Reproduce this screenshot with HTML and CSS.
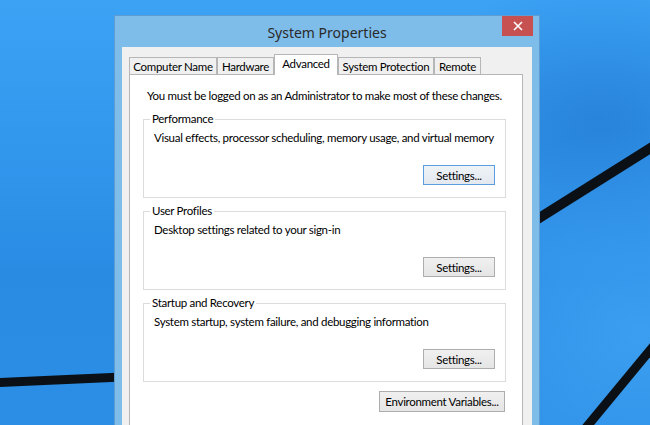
FILE: index.html
```html
<!DOCTYPE html>
<html>
<head>
<meta charset="utf-8">
<title>System Properties</title>
<link rel="stylesheet" href="styles.css">
</head>
<body>
<div class="desktop">
  <svg class="wallpaper" width="650" height="425" viewBox="0 0 650 425">
    <line x1="-10" y1="383" x2="300" y2="369" class="stroke" stroke-width="9"/>
    <line x1="380" y1="318" x2="660" y2="142" class="stroke" stroke-width="10"/>
    <line x1="570" y1="447" x2="670" y2="326" class="stroke" stroke-width="9"/>
  </svg>
  <div class="window">
    <div class="titlebar">
      <span class="title">System Properties</span>
      <button class="close" aria-label="Close">
        <svg width="10" height="10" viewBox="0 0 10 10"><path d="M1 1 L9 9 M9 1 L1 9" stroke="#fff" stroke-width="1.6" fill="none"/></svg>
      </button>
    </div>
    <div class="client">
      <div class="tabs">
        <div class="tab tab-cn">Computer Name</div>
        <div class="tab tab-hw">Hardware</div>
        <div class="tab tab-adv active">Advanced</div>
        <div class="tab tab-sp">System Protection</div>
        <div class="tab tab-rm">Remote</div>
      </div>
      <div class="panel">
        <p class="note">You must be logged on as an Administrator to make most of these changes.</p>
        <fieldset class="group">
          <legend>Performance</legend>
          <p class="desc">Visual effects, processor scheduling, memory usage, and virtual memory</p>
          <div class="actions"><button class="btn btn-settings default">Settings...</button></div>
        </fieldset>
        <fieldset class="group">
          <legend>User Profiles</legend>
          <p class="desc">Desktop settings related to your sign-in</p>
          <div class="actions"><button class="btn btn-settings">Settings...</button></div>
        </fieldset>
        <fieldset class="group">
          <legend>Startup and Recovery</legend>
          <p class="desc">System startup, system failure, and debugging information</p>
          <div class="actions"><button class="btn btn-settings">Settings...</button></div>
        </fieldset>
        <div class="env-row"><button class="btn btn-env">Environment Variables...</button></div>
      </div>
    </div>
  </div>
</div>
</body>
</html>
```
FILE: styles.css
```css
* { box-sizing: border-box; }
html, body { margin: 0; padding: 0; }
body {
  width: 650px;
  height: 425px;
  overflow: hidden;
  font-family: "Lato", "Noto Sans", sans-serif;
}
.desktop {
  position: relative;
  width: 650px;
  height: 425px;
  overflow: hidden;
  background:
    radial-gradient(ellipse 260px 200px at 640px 330px, rgba(80,180,255,0.45), rgba(80,180,255,0) 100%),
    radial-gradient(ellipse 200px 140px at 600px 120px, rgba(20,90,180,0.35), rgba(20,90,180,0) 100%),
    linear-gradient(180deg, #3ba2f4 0%, #3197ed 35%, #2a8be3 65%, #2c8ee5 100%);
}
.wallpaper { position: absolute; left: 0; top: 0; }
.stroke { stroke: #0a1016; stroke-linecap: butt; }

.window {
  position: absolute;
  left: 114px;
  top: 15px;
  width: 426px;
  height: 430px;
  background: #7ebce9;
  border: 1px solid #5f9cd2;
}
.titlebar {
  position: relative;
  height: 31px;
  display: flex;
  align-items: center;
  justify-content: center;
}
.title {
  font-family: "Noto Sans", "Open Sans", sans-serif;
  font-size: 14px;
  color: #2a2a2a;
  padding-top: 1px;
}
.close {
  position: absolute;
  top: 0;
  right: 6px;
  width: 31px;
  height: 20px;
  padding: 0;
  border: 0;
  background: #c75050;
  display: flex;
  align-items: center;
  justify-content: center;
}
.client {
  margin: 0 7px;
  height: 392px;
  background: #f0f0f0;
  padding: 7px 9px 0 7px;
}
.tabs {
  display: flex;
  align-items: flex-end;
  height: 20px;
}
.tab {
  height: 17px;
  border: 1px solid #b6b6b6;
  border-bottom: 0;
  background: #f0f0f0;
  font-size: 11.5px;
  letter-spacing: -0.3px;
  line-height: 17px;
  color: #000;
  text-align: center;
  white-space: nowrap;
}
.tab-cn { width: 88px; }
.tab-hw { width: 57px; }
.tab-adv { width: 64px; }
.tab-sp { width: 96px; }
.tab-rm { width: 47px; }
.tab.active {
  height: 21px;
  background: #fff;
  margin-bottom: -1px;
  position: relative;
  z-index: 1;
  line-height: 18px;
}
.panel {
  height: 380px;
  background: #fff;
  border: 1px solid #b6b6b6;
  padding: 13px 16px 0 13px;
  font-size: 11.5px;
  letter-spacing: -0.3px;
  color: #000;
}
.note {
  margin: 0 0 7px 4px;
  line-height: 16px;
  white-space: nowrap;
}
.group {
  margin: 0 0 5px 0;
  padding: 3px 10px 12px 10px;
  border: 1px solid #dcdcdc;
  min-width: 0;
}
.group legend {
  margin-left: -4px;
  padding: 0 2px;
  line-height: 16px;
}
.desc {
  margin: 0;
  line-height: 16px;
  white-space: nowrap;
}
.actions {
  margin-top: 19px;
  display: flex;
  justify-content: flex-end;
}
.btn {
  font-family: inherit;
  font-size: 11.5px;
  letter-spacing: -0.3px;
  color: #000;
  height: 20px;
  padding: 0;
  white-space: nowrap;
  border: 1px solid #adadad;
  background: linear-gradient(180deg, #f0f0f0 0%, #e5e5e5 100%);
}
.btn-settings { width: 72px; }
.btn.default {
  border-color: #5b9ee0;
  background: linear-gradient(180deg, #eef3f8 0%, #e3e9ef 100%);
}
.env-row {
  margin-top: 9px;
  padding-right: 1px;
  display: flex;
  justify-content: flex-end;
}
.btn-env { width: 126px; height: 21px; }
```
